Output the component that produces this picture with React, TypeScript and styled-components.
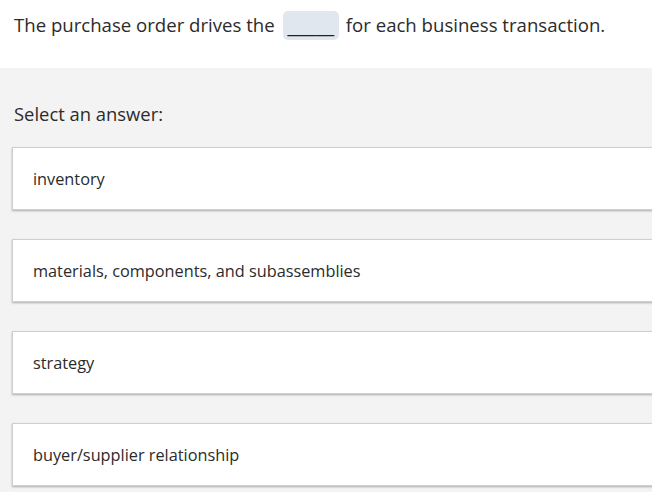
import styled, { createGlobalStyle } from "styled-components";

const GlobalStyle = createGlobalStyle`
  html, body {
    margin: 0;
    padding: 0;
    background: #f3f3f3;
    overflow: hidden;
  }
  body {
    font-family: "Open Sans", "Noto Sans", sans-serif;
    color: #333;
  }
`;

const answers = [
  "inventory",
  "materials, components, and subassemblies",
  "strategy",
  "buyer/supplier relationship",
];

export default function App() {
  return (
    <>
      <GlobalStyle />
      <Page>
        <Question>
          The purchase order drives the <Blank>_____</Blank> for each business transaction.
        </Question>
        <AnswerArea>
          <Prompt>Select an answer:</Prompt>
          <Choices>
            {answers.map((a) => (
              <Choice key={a}>{a}</Choice>
            ))}
          </Choices>
        </AnswerArea>
      </Page>
    </>
  );
}

const Page = styled.div`
  width: 652px;
  height: 492px;
  display: flex;
  flex-direction: column;
  overflow: hidden;
`;

const Question = styled.div`
  background: #fff;
  height: 68px;
  box-sizing: border-box;
  padding: 10px 14px 0;
  font-size: 18.6px;
  line-height: 29px;
  color: #2b2b2b;
  white-space: nowrap;
`;

const Blank = styled.span`
  display: inline-block;
  background: #e1e7ef;
  border-radius: 5px;
  padding: 0 5px;
  margin: 0 2px 0 3px;
  line-height: 29px;
  font-family: "DejaVu Sans", sans-serif;
  color: #222;
`;

const AnswerArea = styled.div`
  flex: 1;
  background: #f3f3f3;
  padding: 32px 0 0 12px;
  overflow: hidden;
`;

const Prompt = styled.div`
  font-size: 18.4px;
  line-height: 28px;
  color: #2b2b2b;
  padding-left: 2px;
  margin-bottom: 19px;
`;

const Choices = styled.div`
  display: flex;
  flex-direction: column;
  gap: 29px;
`;

const Choice = styled.div`
  width: 700px;
  height: 63px;
  flex-shrink: 0;
  box-sizing: border-box;
  background: #fff;
  border: 1px solid #d0d0d0;
  box-shadow: 0 1px 2px rgba(0, 0, 0, 0.3);
  display: flex;
  align-items: center;
  padding: 0 20px;
  font-size: 16.3px;
  color: #2b2b2b;
`;
